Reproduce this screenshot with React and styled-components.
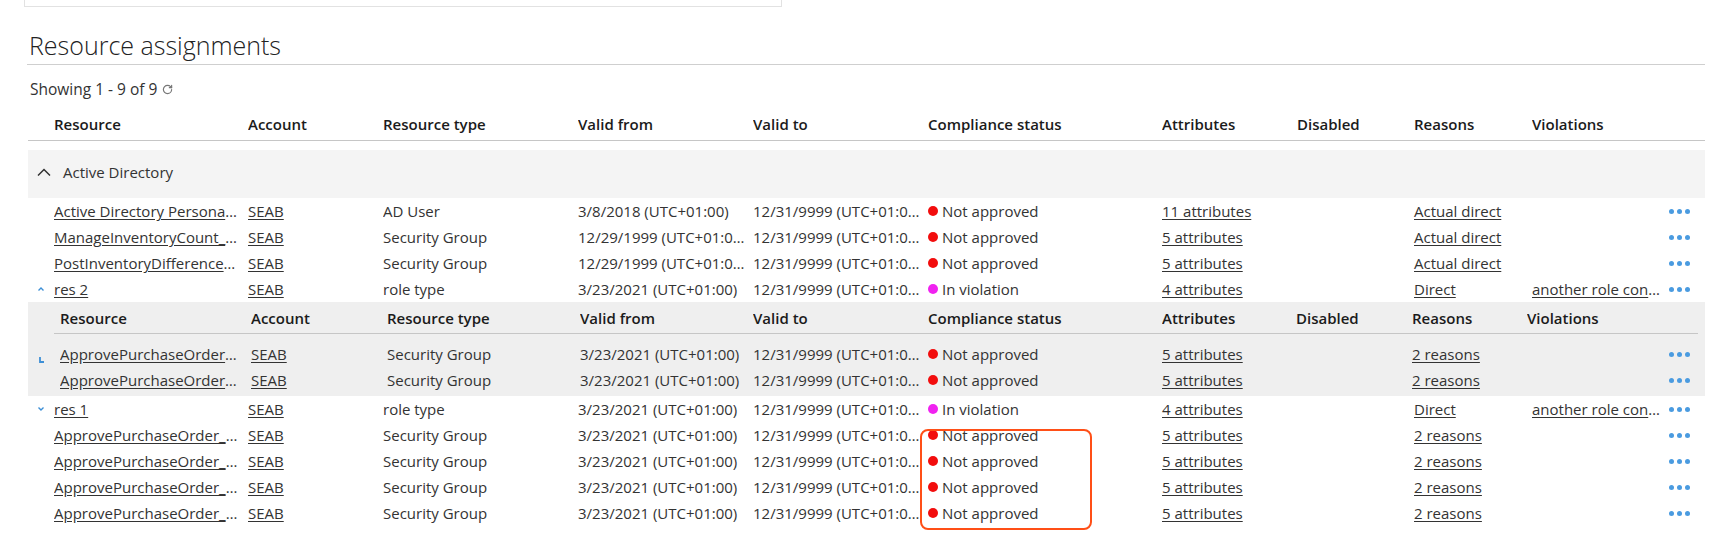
import React from 'react'
import styled, { createGlobalStyle } from 'styled-components'
import { RotateCw } from 'lucide-react'

const mainCols = '26px 194px 135px 195px 175px 175px 234px 135px 117px 118px 136px 1fr'
const subCols = '6px 191px 136px 193px 173px 175px 234px 134px 116px 115px 139px 1fr'

const headers = ['Resource', 'Account', 'Resource type', 'Valid from', 'Valid to', 'Compliance status', 'Attributes', 'Disabled', 'Reasons', 'Violations']

const topRows = [
    { name: 'Active Directory Personal Account', type: 'AD User', from: '3/8/2018 (UTC+01:00)', attrs: '11 attributes', reason: 'Actual direct' },
    { name: 'ManageInventoryCount_SEAB_Group', type: 'Security Group', from: '12/29/1999 (UTC+01:00)', attrs: '5 attributes', reason: 'Actual direct' },
    { name: 'PostInventoryDifferences_SEAB_Group', type: 'Security Group', from: '12/29/1999 (UTC+01:00)', attrs: '5 attributes', reason: 'Actual direct' },
]

const approveRow = { name: 'ApprovePurchaseOrder_SEAB_Group', type: 'Security Group', from: '3/23/2021 (UTC+01:00)', attrs: '5 attributes', reason: '2 reasons' }

const roleRow = (name) => ({ name, type: 'role type', from: '3/23/2021 (UTC+01:00)', attrs: '4 attributes', reason: 'Direct', status: 'violation', violation: 'another role conflict rule' })

const GlobalStyle = createGlobalStyle`
body{
    margin:0;
    background:#fff;
    font-family:"Open Sans", "Liberation Sans", sans-serif;
    color:#333;
}
`

const Page = styled.div`
position:relative;
padding:0 5px 0 27px;
height:554px;
overflow:hidden;
`
const TopPanel = styled.div`
box-sizing:border-box;
margin-left:-3px;
width:758px;
height:7px;
border:1px solid #e2e2e2;
border-top:none;
`
const TitleBar = styled.div`
margin-top:21px;
padding-bottom:2px;
border-bottom:1px solid #cfcfcf;
`
const Title = styled.h2`
margin:0;
padding-left:2px;
font-size:25px;
line-height:34px;
font-weight:300;
color:#222;
`
const Showing = styled.div`
margin-top:14px;
padding-left:3px;
font-size:15.5px;
line-height:20px;
color:#333;
display:flex;
align-items:center;
gap:5px;
svg{ color:#777; }
`
const Table = styled.div`
margin-top:9px;
margin-left:1px;
font-size:15px;
`
const Row = styled.div`
display:grid;
grid-template-columns:${p => p.$cols};
height:26px;
align-items:center;
`
const HeadRow = styled(Row)`
height:${p => p.$h || 32}px;
border-bottom:1px solid #c6c6c6;
font-weight:600;
color:#1b1b1b;
`
const Cell = styled.div`
overflow:hidden;
white-space:nowrap;
text-overflow:ellipsis;
padding-right:8px;
min-width:0;
`
const LinkCell = styled(Cell)`
text-decoration:underline;
text-underline-offset:2px;
color:#333;
cursor:pointer;
`
const GroupBand = styled.div`
box-sizing:border-box;
margin-top:9px;
height:48px;
padding:0 0 4px 9px;
background:#f4f4f4;
display:flex;
align-items:center;
gap:12px;
color:#333;
`
const ExpandCell = styled.div`
padding-left:9px;
display:flex;
align-items:center;
color:#3d8fd6;
`
const Status = styled.div`
display:flex;
align-items:center;
gap:4px;
white-space:nowrap;
`
const Dot = styled.span`
width:10px;
height:10px;
border-radius:50%;
background:${p => p.$color};
flex:none;
`
const Actions = styled.div`
display:flex;
justify-content:flex-end;
gap:3px;
padding-right:${p => p.$pr}px;
cursor:pointer;
span{
    width:5px;
    height:5px;
    border-radius:50%;
    background:#4a9be0;
}
`
const SubBand = styled.div`
display:flex;
background:#efefef;
padding-bottom:3px;
`
const Gutter = styled.div`
width:26px;
flex:none;
padding-top:45px;
padding-left:11px;
box-sizing:border-box;
color:#3d8fd6;
`
const SubTable = styled.div`
flex:1;
margin-right:7px;
`
const SubRows = styled.div`
padding-top:7px;
`
const Highlight = styled.div`
position:absolute;
left:920px;
top:429px;
width:172px;
height:101px;
box-sizing:border-box;
border:2px solid #ff4f17;
border-radius:8px;
pointer-events:none;
`

const ChevronUp = () => (
    <svg width="14" height="8" viewBox="0 0 14 8"><polyline points="1,7.5 7,1.5 13,7.5" fill="none" stroke="#333" strokeWidth="1.5" /></svg>
)
const SmallChevron = ({ down }) => (
    <svg width="8" height="6" viewBox="0 0 8 6">
        <polyline points={down ? '1.5,1.5 4,4 6.5,1.5' : '1.5,4.5 4,2 6.5,4.5'} fill="none" stroke="currentColor" strokeWidth="1.4" />
    </svg>
)
const Corner = () => (
    <svg width="6" height="6" viewBox="0 0 6 6"><path d="M1 0 V5 H5" fill="none" stroke="currentColor" strokeWidth="1.8" /></svg>
)

const statusMap = {
    na: { color: '#f20d0d', text: 'Not approved' },
    violation: { color: '#f022f0', text: 'In violation' },
}

const DataRow = ({ cols, lead, item, pr }) => {
    const s = statusMap[item.status || 'na']
    return (
        <Row $cols={cols}>
            {lead || <div />}
            <LinkCell>{item.name}</LinkCell>
            <LinkCell>SEAB</LinkCell>
            <Cell>{item.type}</Cell>
            <Cell>{item.from}</Cell>
            <Cell>12/31/9999 (UTC+01:00)</Cell>
            <Status><Dot $color={s.color} />{s.text}</Status>
            <div><LinkCell as="span">{item.attrs}</LinkCell></div>
            <div />
            <div><LinkCell as="span">{item.reason}</LinkCell></div>
            {item.violation ? <LinkCell>{item.violation}</LinkCell> : <div />}
            <Actions $pr={pr}><span /><span /><span /></Actions>
        </Row>
    )
}

const Header = ({ cols, h }) => (
    <HeadRow $cols={cols} $h={h}>
        <div />
        {headers.map(t => <Cell key={t}>{t}</Cell>)}
        <div />
    </HeadRow>
)

const App = () => {
    return (
        <Page>
            <GlobalStyle />
            <TopPanel />
            <TitleBar>
                <Title>Resource assignments</Title>
            </TitleBar>
            <Showing>Showing 1 - 9 of 9 <RotateCw size={11} strokeWidth={2.6} /></Showing>

            <Table>
                <Header cols={mainCols} />
                <GroupBand><ChevronUp />Active Directory</GroupBand>
                {topRows.map(r => <DataRow key={r.name} cols={mainCols} item={r} pr={15} />)}
                <DataRow cols={mainCols} item={roleRow('res 2')} pr={15}
                    lead={<ExpandCell><SmallChevron /></ExpandCell>} />

                <SubBand>
                    <Gutter><Corner /></Gutter>
                    <SubTable>
                        <Header cols={subCols} h={31} />
                        <SubRows>
                            {[0, 1].map(i => <DataRow key={i} cols={subCols} item={approveRow} pr={8} />)}
                        </SubRows>
                    </SubTable>
                </SubBand>

                <DataRow cols={mainCols} item={roleRow('res 1')} pr={15}
                    lead={<ExpandCell><SmallChevron down /></ExpandCell>} />
                {[0, 1, 2, 3].map(i => <DataRow key={i} cols={mainCols} item={approveRow} pr={15} />)}
            </Table>

            <Highlight />
        </Page>
    )
}

export default App
